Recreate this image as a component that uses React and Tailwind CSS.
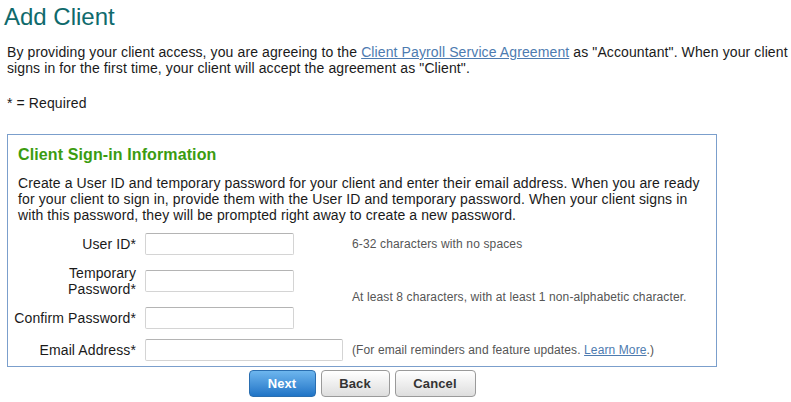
import React from "react";

const font = { fontFamily: '"Liberation Sans", Arial, sans-serif' };

function Field({ width = "w-[149px]" }) {
  return (
    <input
      type="text"
      className={`${width} h-[22px] bg-white border border-[#d4d4d4] border-t-[#b4b4b4] rounded-[2px] outline-none px-1 text-[13px]`}
    />
  );
}

export default function App() {
  return (
    <div style={font} className="w-[791px] h-[402px] bg-white text-[#1a1a1a] tracking-[0.11px] overflow-hidden">
      <h1 className="ml-[4px] mt-[3px] text-[24px] leading-[28px] text-[#0f6a6c] font-normal tracking-normal">
        Add Client
      </h1>

      <p className="ml-[7px] mt-[13px] text-[14px] leading-[16px]">
        By providing your client access, you are agreeing to the{" "}
        <a href="#" className="text-[#4d7bb0] underline">
          Client Payroll Service Agreement
        </a>{" "}
        as "Accountant". When your client signs in for the first time, your client will accept the agreement as
        "Client".
      </p>

      <p className="ml-[7px] mt-[19px] text-[14px] leading-[16px]">* = Required</p>

      <div className="ml-[7px] mt-[23px] w-[710px]">
        <div className="border border-[#7b9fcc] pt-[10px] pb-[5px] px-[10px]">
          <h2 className="text-[16px] leading-[20px] font-bold text-[#3b9c10]">
            Client Sign-in Information
          </h2>
          <p className="mt-[10px] text-[14px] leading-[16px]">
            Create a User ID and temporary password for your client and enter their email address. When you are ready
            for your client to sign in, provide them with the User ID and temporary password. When your client signs in
            with this password, they will be prompted right away to create a new password.
          </p>

          <div className="-ml-[8px] mt-[10px] grid grid-cols-[126px_198px_1fr] gap-x-[9px] gap-y-[10px] items-center text-[14px] leading-[16px]">
            <label className="text-right whitespace-nowrap">User ID*</label>
            <Field />
            <span className="text-[12px] text-[#555] tracking-[0.14px]">6-32 characters with no spaces</span>

            <label className="text-right">
              Temporary
              <br />
              Password*
            </label>
            <Field />
            <span className="row-span-2 text-[12px] text-[#555]">
              At least 8 characters, with at least 1 non-alphabetic character.
            </span>

            <label className="text-right whitespace-nowrap">Confirm Password*</label>
            <Field />

            <label className="text-right whitespace-nowrap">Email Address*</label>
            <Field width="w-[198px]" />
            <span className="text-[12px] text-[#555]">
              (For email reminders and feature updates.{" "}
              <a href="#" className="text-[#4d7bb0] underline">
                Learn More
              </a>
              .)
            </span>
          </div>
        </div>

        <div className="mt-[3px] flex justify-center gap-[5px]">
          <button className="w-[67px] h-[27px] rounded-[4px] border border-[#2a6eb0] bg-gradient-to-b from-[#6db6ee] to-[#1f74c6] text-white text-[13px] font-bold">
            Next
          </button>
          <button className="w-[69px] h-[27px] rounded-[4px] border border-[#9a9a9a] bg-gradient-to-b from-white to-[#dedede] text-[#333] text-[13px] font-bold">
            Back
          </button>
          <button className="w-[81px] h-[27px] rounded-[4px] border border-[#9a9a9a] bg-gradient-to-b from-white to-[#dedede] text-[#333] text-[13px] font-bold">
            Cancel
          </button>
        </div>
      </div>
    </div>
  );
}
